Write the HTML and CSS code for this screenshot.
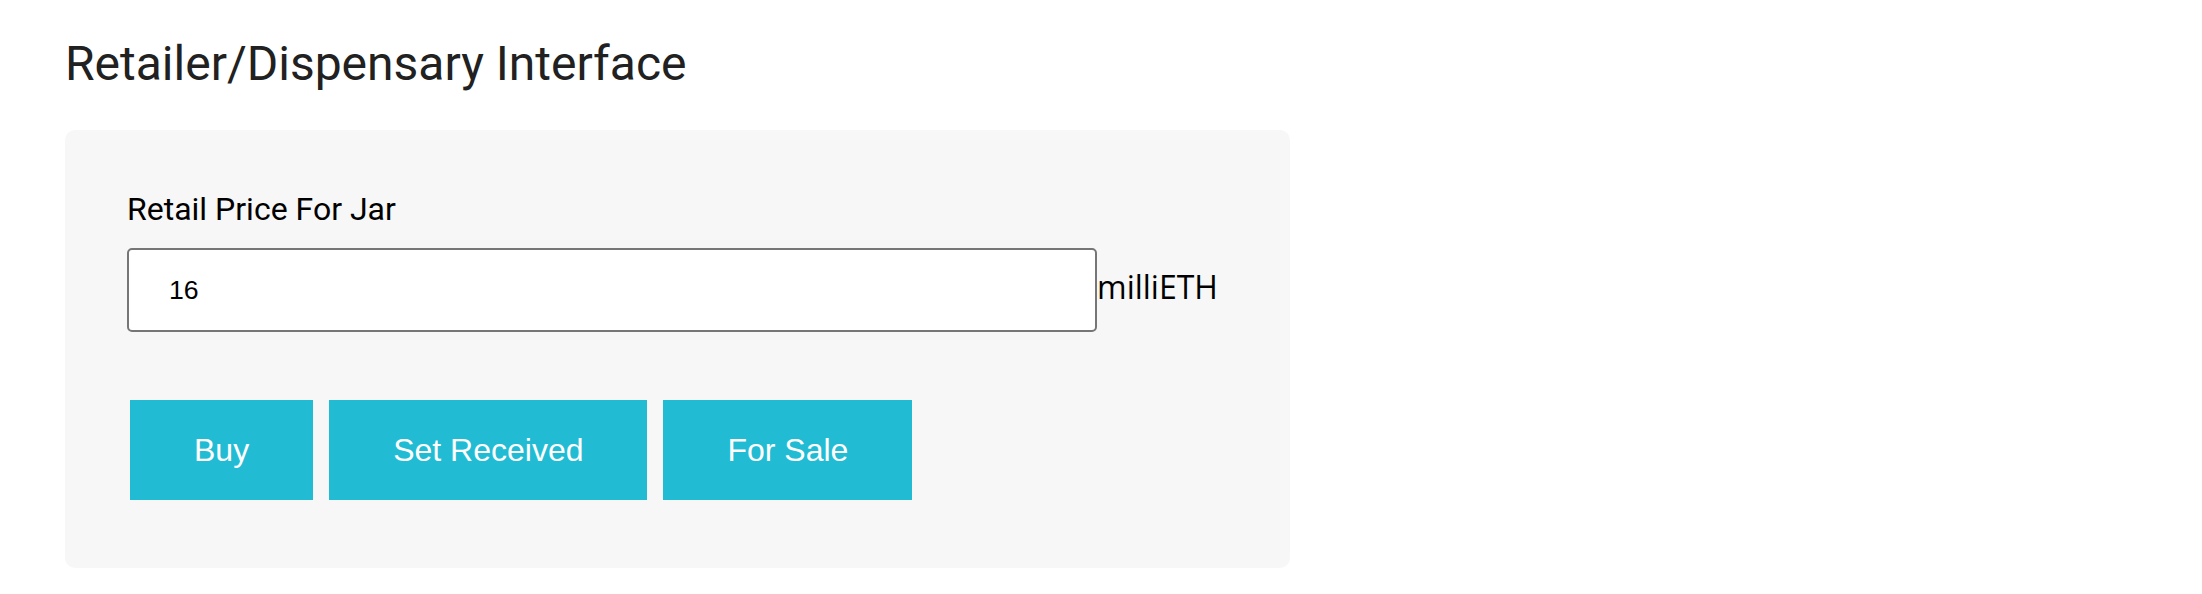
FILE: index.html
```html
<!DOCTYPE html>
<html lang="en">
<head>
<meta charset="utf-8">
<title>Retailer/Dispensary Interface</title>
<link rel="stylesheet" href="styles.css">
</head>
<body>
<main class="page">
  <h2 class="title">Retailer/Dispensary Interface</h2>
  <section class="panel">
    <label class="field-label" for="price">Retail Price For Jar</label>
    <div class="price-row">
      <input id="price" class="price-input" type="text" value="16"><span class="unit">milliETH</span>
    </div>
    <div class="actions">
      <button class="btn" type="button">Buy</button>
      <button class="btn" type="button">Set Received</button>
      <button class="btn" type="button">For Sale</button>
    </div>
  </section>
</main>
</body>
</html>
```

FILE: styles.css
```css
html, body {
  margin: 0;
  padding: 0;
  background: #ffffff;
}

.page {
  padding: 36px 0 0 65px;
}

.title {
  margin: 0 0 38px;
  font-family: Roboto, "Liberation Sans", sans-serif;
  font-weight: 400;
  font-size: 48px;
  line-height: 56px;
  color: #212121;
}

.panel {
  box-sizing: border-box;
  width: 1225px;
  padding: 60px 62px 68px;
  background: #f7f7f7;
  border-radius: 10px;
}

.field-label {
  display: block;
  margin-bottom: 20px;
  font-family: Roboto, "Liberation Sans", sans-serif;
  font-size: 32px;
  line-height: 38px;
  color: #000000;
}

.price-row {
  display: flex;
  align-items: baseline;
}

.price-input {
  box-sizing: border-box;
  width: 970px;
  height: 84px;
  margin: 0;
  padding: 0 40px;
  border: 2px solid #767676;
  border-radius: 5px;
  background: #ffffff;
  font-family: "Liberation Sans", Arial, sans-serif;
  font-size: 26.67px;
  color: #000000;
  outline: none;
}

.unit {
  font-family: "Open Sans", "Noto Sans", sans-serif;
  font-size: 32px;
  color: #000000;
}

.actions {
  display: flex;
  gap: 16px;
  margin-top: 68px;
  padding-left: 3px;
}

.btn {
  margin: 0;
  padding: 32px 64px;
  border: none;
  border-radius: 0;
  background: #21bcd4;
  color: #ffffff;
  font-family: "Liberation Sans", Arial, sans-serif;
  font-size: 32px;
  line-height: 36px;
  cursor: pointer;
}
```
